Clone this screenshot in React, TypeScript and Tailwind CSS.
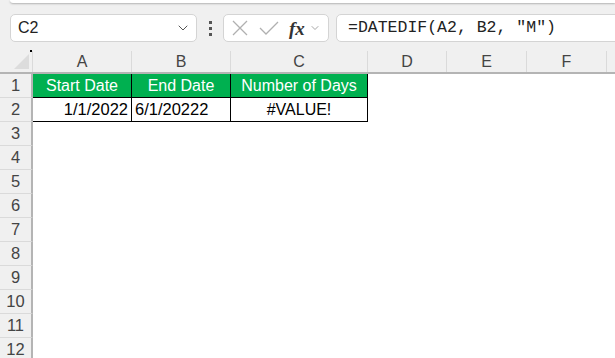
import { ChevronDown } from "lucide-react";

const cols = [
  { label: "A", w: "w-[99px]" },
  { label: "B", w: "w-[99px]" },
  { label: "C", w: "w-[137px]" },
  { label: "D", w: "w-[79px]" },
  { label: "E", w: "w-[80px]" },
  { label: "F", w: "w-[80px]" },
  { label: "", w: "w-[80px]" },
];

const font = "font-['Liberation_Sans',Arial,sans-serif]";

function ColHeader() {
  return (
    <div className="flex h-[23px] shrink-0 bg-[#f0f0f0] border-b-2 border-[#b4b4b4]">
      <div className="relative w-[33px] shrink-0 border-r border-[#dadada]">
        <div className="absolute right-[3px] bottom-[3px] w-0 h-0 border-l-[15px] border-l-transparent border-b-[15px] border-b-[#dcdcdc]" />
        <div className="absolute right-0 top-[-1px] w-[2px] h-[2px] bg-black" />
      </div>
      {cols.map((c, i) => (
        <div
          key={i}
          className={`${c.w} shrink-0 flex items-center justify-center border-r border-[#dadada] text-[16px] text-[#444]`}
        >
          {c.label}
        </div>
      ))}
    </div>
  );
}

function RowNum({ n }: { n: number }) {
  return (
    <div className="w-[33px] shrink-0 flex items-center justify-center bg-[#f0f0f0] border-r-2 border-[#b4b4b4] border-b border-b-[#dadada] text-[16.5px] text-[#444]">
      {n}
    </div>
  );
}

export default function App() {
  return (
    <div className={`w-[615px] h-[358px] bg-[#f0f0f0] overflow-hidden flex flex-col ${font}`}>
      {/* ribbon edge */}
      <div className="h-[4px] shrink-0">
        <div className="ml-[10px] h-[3px] bg-white rounded-bl-[5px] shadow-[0_1px_2px_rgba(0,0,0,0.25)]" />
      </div>

      {/* formula bar */}
      <div className="flex items-center h-[47px] shrink-0 pl-[10px] pt-[1px]">
        <div className="w-[187px] h-[28px] shrink-0 bg-white border border-[#d4d4d4] rounded-[5px] flex items-center justify-between pl-[7px] pr-[5px]">
          <span className="text-[16px] text-[#222]">C2</span>
          <ChevronDown className="w-[16px] h-[16px] text-[#555]" strokeWidth={1.5} />
        </div>
        <div className="w-[26px] shrink-0 flex flex-col items-center gap-[3px]">
          <div className="w-[3px] h-[3px] bg-[#555]" />
          <div className="w-[3px] h-[3px] bg-[#555]" />
          <div className="w-[3px] h-[3px] bg-[#555]" />
        </div>
        <div className="w-[106px] h-[28px] shrink-0 bg-white border border-[#d4d4d4] rounded-[5px] flex items-center pl-[7px]">
          <svg width="18" height="18" viewBox="0 0 18 18" className="shrink-0">
            <path d="M2 2 L16 16 M16 2 L2 16" stroke="#b0b0b0" strokeWidth="1.3" fill="none" />
          </svg>
          <svg width="20" height="18" viewBox="0 0 20 18" className="ml-[10px] shrink-0">
            <path d="M1 9 L7 15 L19 3" stroke="#b0b0b0" strokeWidth="1.3" fill="none" />
          </svg>
          <span className="ml-[10px] font-['Liberation_Serif',serif] italic font-bold text-[19px] text-[#333] leading-none">
            fx
          </span>
          <ChevronDown className="ml-[4px] w-[12px] h-[12px] text-[#888]" strokeWidth={1.5} />
        </div>
        <div className="ml-[7px] h-[28px] flex-1 min-w-[300px] bg-white border border-[#d4d4d4] rounded-l-[5px] flex items-center pl-[11px]">
          <span className="font-['Liberation_Mono',monospace] text-[16.5px] text-[#222] whitespace-pre">
            =DATEDIF(A2, B2, "M")
          </span>
        </div>
      </div>

      {/* grid */}
      <div className="flex flex-col bg-white flex-1 min-h-0">
        <ColHeader />
        <div className="flex h-[24px] shrink-0">
          <RowNum n={1} />
          <div className="w-[99px] shrink-0 bg-[#00b050] border-r border-b border-black flex items-center justify-center text-white text-[16px]">
            Start Date
          </div>
          <div className="w-[99px] shrink-0 bg-[#00b050] border-r border-b border-black flex items-center justify-center text-white text-[16px]">
            End Date
          </div>
          <div className="w-[137px] shrink-0 bg-[#00b050] border-r border-b border-black flex items-center justify-center text-white text-[16px]">
            Number of Days
          </div>
        </div>
        <div className="flex h-[24px] shrink-0">
          <RowNum n={2} />
          <div className="w-[99px] shrink-0 border-r border-b border-black flex items-center justify-end pr-[3px] text-black text-[16.5px]">
            1/1/2022
          </div>
          <div className="w-[99px] shrink-0 border-r border-b border-black flex items-center pl-[3px] text-black text-[16.5px]">
            6/1/20222
          </div>
          <div className="w-[137px] shrink-0 border-r border-b border-black flex items-center justify-center text-black text-[16px]">
            #VALUE!
          </div>
        </div>
        {[3, 4, 5, 6, 7, 8, 9, 10, 11, 12].map((n) => (
          <div key={n} className="flex h-[24px] shrink-0">
            <RowNum n={n} />
          </div>
        ))}
      </div>
    </div>
  );
}
